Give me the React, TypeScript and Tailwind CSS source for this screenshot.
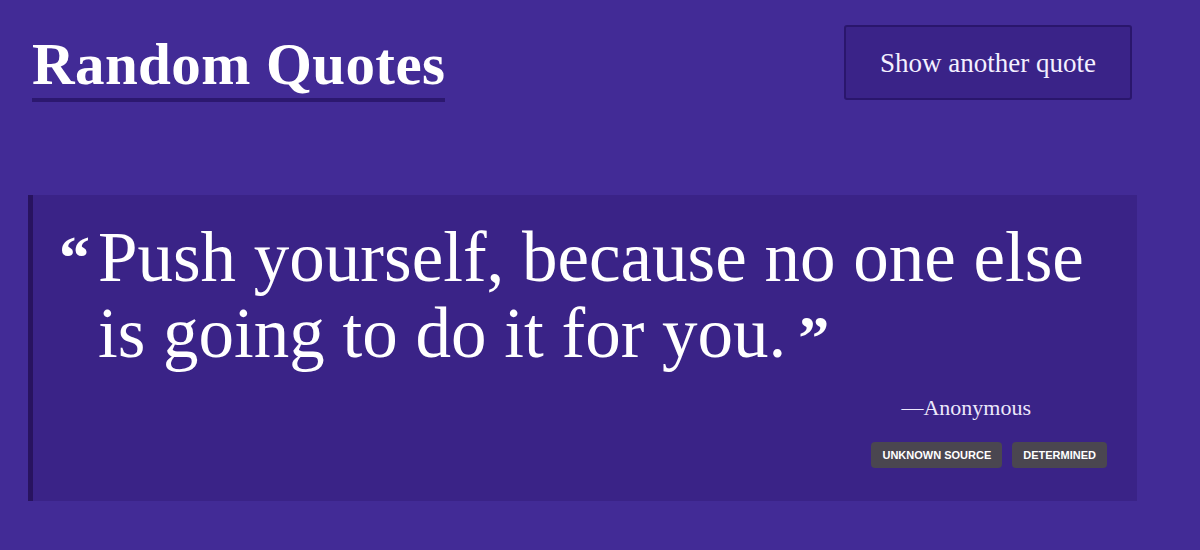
export default function App() {
  const serif = { fontFamily: '"Liberation Serif", "DejaVu Serif", serif' };
  return (
    <div className="min-h-[550px] w-full bg-[#422b96] text-white" style={serif}>
      <div className="flex items-start justify-between pl-[32px] pr-[68px] pt-[25px]">
        <h1 className="border-b-4 border-[#2c186f] pt-[9px] pb-[4px] text-[59px] font-bold leading-[60px] tracking-[0.4px]">
          Random Quotes
        </h1>
        <button className="flex h-[75px] w-[288px] items-center justify-center rounded-[3px] border-2 border-[#2a166c] bg-[#3a2388] pt-[2px] text-[27px] text-[#f4f0ff]">
          Show another quote
        </button>
      </div>

      <div className="mt-[93px] ml-[28px] mr-[63px] h-[306px] border-l-[5px] border-[#28135f] bg-[#3a2387] pt-[24px] pr-[30px]">
        <div className="flex">
          <span className="w-[65px] shrink-0 pt-[18px] pr-[8px] text-right text-[62px] font-bold leading-[40px]">
            &ldquo;
          </span>
          <p className="max-w-[1010px] text-[71px] leading-[76px]">
            Push yourself, because no one else is going to do it for you.
            <span className="ml-[12px] inline-block h-[40px] align-top pt-[22px] text-[62px] font-bold leading-[40px]">
              &rdquo;
            </span>
          </p>
        </div>
        <div className="mt-[26px] pr-[76px] text-right text-[22px] leading-none text-[#ece8fb]">
          &mdash;Anonymous
        </div>
        <div
          className="mt-[23px] flex justify-end gap-[10px]"
          style={{ fontFamily: '"Liberation Sans", Arial, sans-serif' }}
        >
          <span className="rounded-[4px] bg-[#4a4650] px-[11px] py-[6px] text-[11px] font-bold leading-[14px]">
            UNKNOWN SOURCE
          </span>
          <span className="rounded-[4px] bg-[#4a4650] px-[11px] py-[6px] text-[11px] font-bold leading-[14px]">
            DETERMINED
          </span>
        </div>
      </div>
    </div>
  );
}
